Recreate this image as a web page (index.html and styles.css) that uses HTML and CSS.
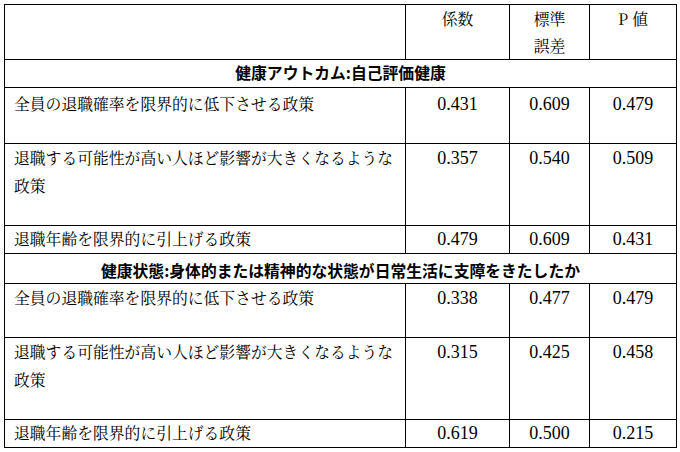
FILE: index.html
```html
<!DOCTYPE html>
<html lang="ja">
<head>
<meta charset="utf-8">
<link rel="stylesheet" href="styles.css">
</head>
<body>
<table class="tbl">
  <colgroup>
    <col class="c-label">
    <col class="c-coef">
    <col class="c-se">
    <col class="c-p">
  </colgroup>
  <tr class="r-head">
    <th class="label"></th>
    <th>係数</th>
    <th>標準<br>誤差</th>
    <th>P 値</th>
  </tr>
  <tr class="r-sec1">
    <td class="sec" colspan="4">健康アウトカム:自己評価健康</td>
  </tr>
  <tr class="r-2l">
    <td class="label">全員の退職確率を限界的に低下させる政策</td>
    <td class="num">0.431</td>
    <td class="num">0.609</td>
    <td class="num">0.479</td>
  </tr>
  <tr class="r-3l">
    <td class="label">退職する可能性が高い人ほど影響が大きくなるような<br>政策</td>
    <td class="num">0.357</td>
    <td class="num">0.540</td>
    <td class="num">0.509</td>
  </tr>
  <tr class="r-1l">
    <td class="label">退職年齢を限界的に引上げる政策</td>
    <td class="num">0.479</td>
    <td class="num">0.609</td>
    <td class="num">0.431</td>
  </tr>
  <tr class="r-sec2">
    <td class="sec sec-b" colspan="4">健康状態:身体的または精神的な状態が日常生活に支障をきたしたか</td>
  </tr>
  <tr class="r-2s">
    <td class="label">全員の退職確率を限界的に低下させる政策</td>
    <td class="num">0.338</td>
    <td class="num">0.477</td>
    <td class="num">0.479</td>
  </tr>
  <tr class="r-3l">
    <td class="label">退職する可能性が高い人ほど影響が大きくなるような<br>政策</td>
    <td class="num">0.315</td>
    <td class="num">0.425</td>
    <td class="num">0.458</td>
  </tr>
  <tr class="r-1l">
    <td class="label">退職年齢を限界的に引上げる政策</td>
    <td class="num">0.619</td>
    <td class="num">0.500</td>
    <td class="num">0.215</td>
  </tr>
</table>
</body>
</html>
```

FILE: styles.css
```css
html, body {
  margin: 0;
  padding: 0;
  background: #ffffff;
}

body {
  padding: 4px 0 0 4px;
  font-family: "Noto Serif CJK JP", "Noto Sans CJK JP", serif;
  color: #000000;
}

.tbl {
  border-collapse: collapse;
  table-layout: fixed;
  width: 672px;
}

.c-label { width: 401px; }
.c-coef { width: 104px; }
.c-se { width: 80px; }
.c-p { width: 87px; }

.tbl th,
.tbl td {
  border: 1px solid #000000;
  vertical-align: top;
  padding: 0 9px 0 9px;
  font-size: 15.8px;
  line-height: 28px;
  font-weight: 400;
  white-space: nowrap;
}

.tbl th {
  text-align: center;
  padding-top: 1px;
  line-height: 26.5px;
}

.tbl td.label {
  text-align: left;
}

.tbl td.num {
  text-align: center;
  font-family: "Liberation Serif", serif;
  font-size: 18px;
}

.tbl td.sec {
  text-align: center;
  font-family: "Noto Sans CJK JP", sans-serif;
  font-weight: 700;
  line-height: 26px;
}

.tbl td.sec-b {
  padding-top: 5px;
  line-height: 24px;
}

.r-head { height: 55px; }
.r-sec1 { height: 28px; }
.r-2l { height: 56px; }
.r-2s { height: 54px; }
.r-3l { height: 82px; }
.r-1l { height: 28px; }
.r-sec2 { height: 30px; }

.r-2l td { padding-top: 2px; }
.r-1l td { line-height: 26px; }
```
